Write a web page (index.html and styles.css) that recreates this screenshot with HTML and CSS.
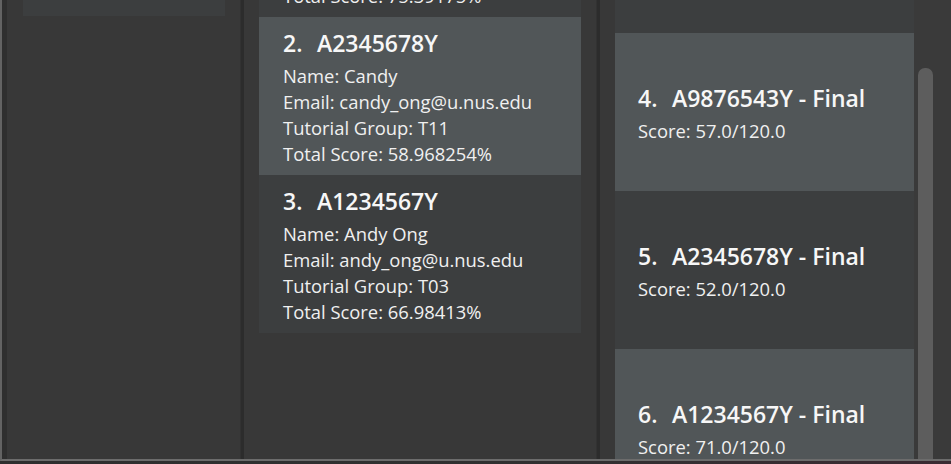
FILE: index.html
```html
<!DOCTYPE html>
<html lang="en">
<head>
<meta charset="utf-8">
<title>Student list</title>
<link rel="stylesheet" href="styles.css">
</head>
<body>
<div class="window">
  <section class="panel panel-left">
    <div class="list list-left">
      <div class="card card-dark card-empty"></div>
    </div>
  </section>
  <div class="divider"></div>
  <section class="panel panel-mid">
    <div class="list list-mid">
      <article class="card card-dark student">
        <div class="title"><span class="num">1.</span><span>A9876543Y</span></div>
        <div class="line">Name: Bob Tan</div>
        <div class="line">Email: bob_tan@u.nus.edu</div>
        <div class="line">Tutorial Group: T02</div>
        <div class="line">Total Score: 75.39175%</div>
      </article>
      <article class="card card-light student">
        <div class="title"><span class="num">2.</span><span>A2345678Y</span></div>
        <div class="line">Name: Candy</div>
        <div class="line">Email: candy_ong@u.nus.edu</div>
        <div class="line">Tutorial Group: T11</div>
        <div class="line">Total Score: 58.968254%</div>
      </article>
      <article class="card card-dark student">
        <div class="title"><span class="num">3.</span><span>A1234567Y</span></div>
        <div class="line">Name: Andy Ong</div>
        <div class="line">Email: andy_ong@u.nus.edu</div>
        <div class="line">Tutorial Group: T03</div>
        <div class="line">Total Score: 66.98413%</div>
      </article>
    </div>
  </section>
  <div class="divider"></div>
  <section class="panel panel-right">
    <div class="list list-right">
      <article class="card card-dark score">
        <div class="title"><span class="num">3.</span><span>A1234567Y - Midterm</span></div>
        <div class="line">Score: 40.0/50.0</div>
      </article>
      <article class="card card-light score">
        <div class="title"><span class="num">4.</span><span>A9876543Y - Final</span></div>
        <div class="line">Score: 57.0/120.0</div>
      </article>
      <article class="card card-dark score">
        <div class="title"><span class="num">5.</span><span>A2345678Y - Final</span></div>
        <div class="line">Score: 52.0/120.0</div>
      </article>
      <article class="card card-light score">
        <div class="title"><span class="num">6.</span><span>A1234567Y - Final</span></div>
        <div class="line">Score: 71.0/120.0</div>
      </article>
    </div>
    <div class="scrollbar"><div class="thumb"></div></div>
  </section>
</div>
</body>
</html>
```
FILE: styles.css
```css
* { box-sizing: border-box; }
html, body { margin: 0; padding: 0; }
body {
  width: 951px;
  height: 464px;
  overflow: hidden;
  background: linear-gradient(90deg, #2e2e2e 0%, #303030 55%, #3a2a32 100%);
  font-family: "Open Sans", "Noto Sans", sans-serif;
  color: #ffffff;
}
.window {
  display: flex;
  height: 461px;
  background: #383838;
  border-left: 2px solid #636363;
  border-bottom: 2px solid #6c6c6c;
}
.panel {
  height: 100%;
  overflow: hidden;
  background: #383838;
}
.panel-left {
  width: 238px;
  border-left: 5px solid #2f2f2f;
  padding: 0 15px 0 16px;
}
.panel-mid {
  width: 352px;
  padding: 0 15px;
}
.panel-right {
  flex: 1;
  display: flex;
  padding-left: 15px;
}
.divider {
  width: 4px;
  height: 100%;
  background: #2c2c2c;
  border-left: 1px solid #323232;
}
.list { display: flex; flex-direction: column; }
.list-left { margin-top: -142px; }
.list-mid { margin-top: -141px; }
.list-right { margin-top: -125px; width: 299px; }
.card {
  height: 158px;
  flex: none;
  overflow: hidden;
}
.card-dark { background: #3c3e3f; }
.card-light { background: #515658; }
.student { padding: 11px 24px 0 24px; }
.score { padding: 50px 23px 0 23px; }
.title {
  font-size: 23px;
  font-weight: 600;
  line-height: 30px;
  margin-bottom: 5px;
  white-space: nowrap;
  color: #f7f7f7;
}
.num {
  display: inline-block;
  width: 34px;
}
.line {
  font-size: 18.4px;
  line-height: 26px;
  color: #f0f0f0;
  white-space: nowrap;
}
.scrollbar {
  width: 37px;
  height: 100%;
  padding: 68px 18px 0 4px;
  background: #3a3a3a;
}
.thumb {
  width: 15px;
  height: 100%;
  background: #5d5d5d;
  border-radius: 7px 7px 0 0;
}
```
